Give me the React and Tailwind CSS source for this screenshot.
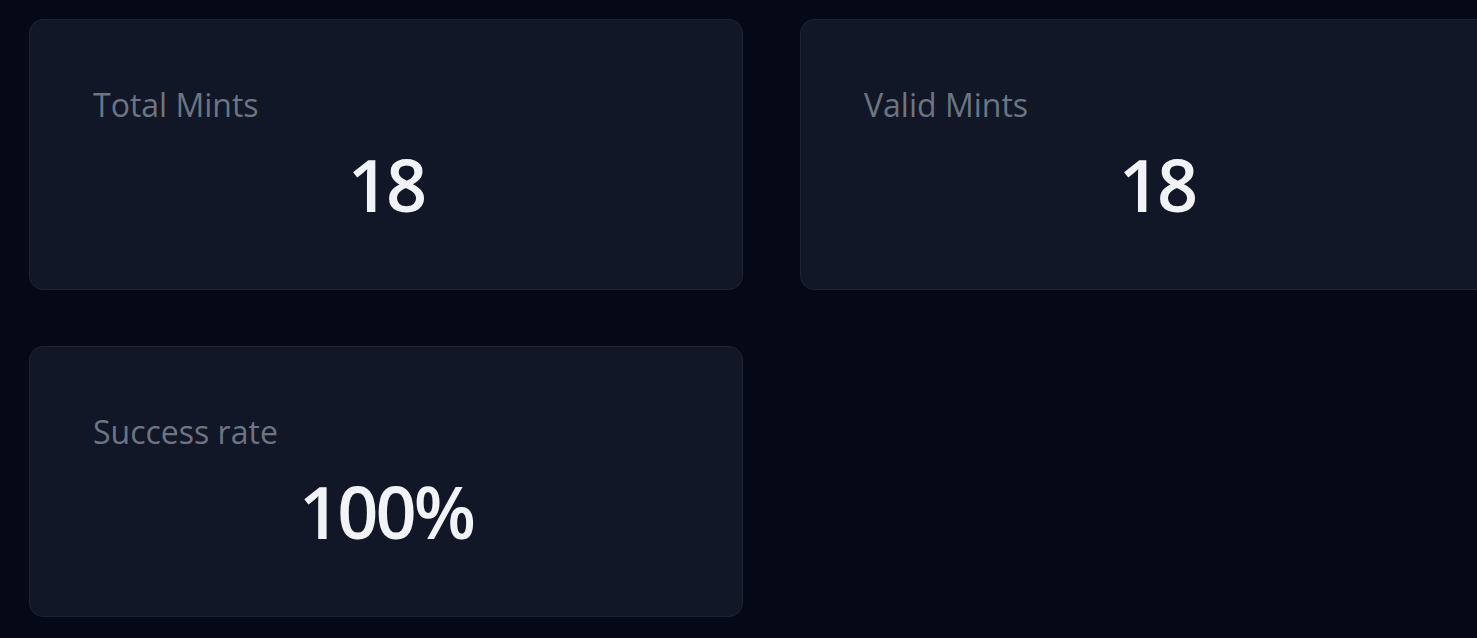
import React from 'react';

const stats = [
  { label: 'Total Mints', value: '18' },
  { label: 'Valid Mints', value: '18' },
  { label: 'Success rate', value: '100%' },
];

const StatCard = ({ label, value }) => (
  <div className="h-[271px] rounded-[14px] border border-[#1d2333] bg-[#111726] pt-[66px]">
    <div className="pl-[63px] text-[32px] leading-[38px] text-[#6e7482]">{label}</div>
    <div className="mt-[24px] text-center text-[72px] leading-[72px] font-semibold tracking-[-0.04em] text-[#f1f3f7]">
      {value}
    </div>
  </div>
);

const App = () => {
  return (
    <div
      className="h-[638px] w-full overflow-hidden bg-[#050817] pl-[29px] pt-[19px]"
      style={{ fontFamily: '"Open Sans", "Noto Sans", sans-serif' }}
    >
      <div className="grid grid-cols-[714px_714px] gap-x-[57px] gap-y-[56px]">
        {stats.map((s) => (
          <StatCard key={s.label} label={s.label} value={s.value} />
        ))}
      </div>
    </div>
  );
};

export default App;
